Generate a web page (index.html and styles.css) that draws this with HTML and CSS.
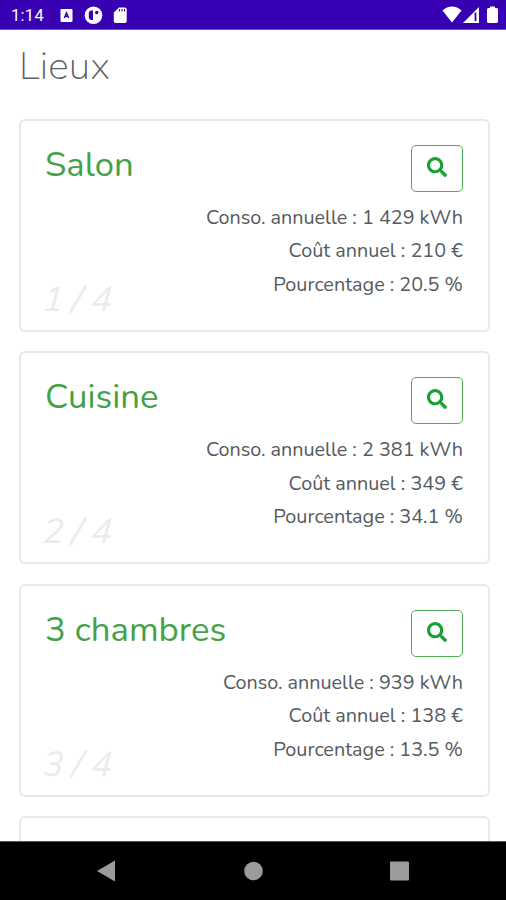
FILE: index.html
```html
<!DOCTYPE html>
<html lang="fr">
<head>
<meta charset="utf-8">
<title>Lieux</title>
<link rel="stylesheet" href="styles.css">
</head>
<body>
<svg class="defs" width="0" height="0"><symbol id="search" viewBox="0 0 512 512"><path d="M505 442.700L405.300 343c-4.500-4.500-10.600-7-17-7H372c27.600-35.300 44-79.700 44-128C416 93.100 322.900 0 208 0S0 93.100 0 208s93.100 208 208 208c48.300 0 92.700-16.400 128-44v16.300c0 6.400 2.500 12.500 7 17l99.700 99.700c9.400 9.400 24.600 9.400 33.900 0l28.300-28.300c9.400-9.400 9.400-24.600.1-34zM208 336c-70.700 0-128-57.200-128-128 0-70.700 57.200-128 128-128 70.700 0 128 57.200 128 128 0 70.700-57.200 128-128 128z"/></symbol></svg>
<header class="status">
  <span class="clock">1:14</span>
  <svg class="notifications" width="70" height="18" viewBox="0 0 70 18">
    <rect x="1.500" y="3" width="12" height="13" rx="1" fill="#fff"/>
    <path d="M5.300 12L7.500 6.800 9.700 12M6.100 10.300h2.800" fill="none" stroke="#3700b3" stroke-width="1.500"/>
    <circle cx="34.500" cy="9.200" r="8.800" fill="#fff"/>
    <path d="M32.200 4.600h1.800v9.400h-1.300c-1.800 0-2.900-1.200-2.900-3V7c0-1.500.9-2.400 2.400-2.400z" fill="#3700b3"/>
    <circle cx="37.700" cy="6.500" r="1.700" fill="#3700b3"/>
    <path d="M60 1.500h6q1.700 0 1.700 1.700v12q0 1.700-1.700 1.700H56.500q-1.700 0-1.700-1.700V6.500z" fill="#fff"/>
    <path d="M60.500 3v2.500M63 3v2.500M65.500 3v2.500" stroke="#3700b3" stroke-width="1.100"/>
  </svg>
  <svg class="signals" width="58" height="18" viewBox="0 0 58 18">
    <path d="M.5 4.500C6-.7 14-.7 19.500 4.500L10 16.500z" fill="#fff"/>
    <path d="M21 17L37 1v16z" fill="#fff"/><path d="M33.500 6.500V15" stroke="#3700b3" stroke-width="1.800"/>
    <path d="M48 2V.5h5V2h1.500q1.500 0 1.500 1.500v12q0 1.500-1.500 1.500h-8Q45 17 45 15.500v-12Q45 2 46.500 2z" fill="#fff"/>
  </svg>
</header>
<main class="content">
  <h1 class="page-title">Lieux</h1>
  <section class="card">
    <div class="card-head"><h2 class="name">Salon</h2><button class="search" aria-label="Détails"><svg width="20" height="20"><use href="#search"/></svg></button></div>
    <div class="details"><p>Conso. annuelle : 1 429 kWh</p><p>Coût annuel : 210 €</p><p>Pourcentage : 20.5 %</p></div>
    <span class="rank">1 / 4</span>
  </section>
  <section class="card">
    <div class="card-head"><h2 class="name">Cuisine</h2><button class="search" aria-label="Détails"><svg width="20" height="20"><use href="#search"/></svg></button></div>
    <div class="details"><p>Conso. annuelle : 2 381 kWh</p><p>Coût annuel : 349 €</p><p>Pourcentage : 34.1 %</p></div>
    <span class="rank">2 / 4</span>
  </section>
  <section class="card">
    <div class="card-head"><h2 class="name">3 chambres</h2><button class="search" aria-label="Détails"><svg width="20" height="20"><use href="#search"/></svg></button></div>
    <div class="details"><p>Conso. annuelle : 939 kWh</p><p>Coût annuel : 138 €</p><p>Pourcentage : 13.5 %</p></div>
    <span class="rank">3 / 4</span>
  </section>
  <section class="card"></section>
</main>
<nav class="navbar">
  <svg width="20" height="22" viewBox="0 0 20 22"><path d="M1 11L19 .5v21z" fill="#9b9b9b"/></svg>
  <svg width="20" height="20" viewBox="0 0 20 20"><circle cx="10.500" cy="10" r="9.300" fill="#9b9b9b"/></svg>
  <svg width="20" height="20" viewBox="0 0 20 20"><rect x="0" y=".5" width="19" height="19" rx="1" fill="#9b9b9b"/></svg>
</nav>
</body>
</html>
```
FILE: styles.css
```css
* { box-sizing: border-box; }
body {
  margin: 0;
  height: 900px;
  overflow: hidden;
  display: flex;
  flex-direction: column;
  background: #fff;
  color: #555b60;
  font-family: Nunito, Lato, sans-serif;
}
.defs { position: absolute; }
h1, h2, p { margin: 0; }
.status {
  flex: none;
  height: 30px;
  padding: 0 6px 0 11px;
  display: flex;
  align-items: center;
  background: #3700b3;
  border-bottom: 1px solid #7655c9;
}
.clock { width: 48px; color: #fff; font: 400 16.500px/30px Roboto, sans-serif; letter-spacing: .3px; white-space: nowrap; padding-top: 2px; }
.notifications { margin-top: 1px; }
.signals { margin: 1px 0 0 auto; }
.content { height: 811px; overflow: hidden; padding: 10px 16px 0 19px; }
.page-title {
  height: 78.500px;
  font: 200 39px/53px Nunito, Lato, sans-serif;
  letter-spacing: .2px;
  color: #5c6166;
}
.card {
  position: relative;
  width: 471px;
  height: 213px;
  margin-bottom: 19.500px;
  padding: 24px 25px 0 24px;
  border: 2px solid #e8e8e8;
  border-radius: 6px;
}
.card-head { display: flex; align-items: flex-start; justify-content: space-between; height: 48px; }
.name { font-weight: 450; font-size: 34.700px; line-height: 40px; color: #43a247; white-space: nowrap; }
.search {
  width: 52px;
  height: 47px;
  padding: 0 0 3px;
  display: flex;
  align-items: center;
  justify-content: center;
  border: 1.500px solid #4aae50;
  border-radius: 5px;
  background: #fff;
}
.search svg { fill: #17a033; }
.details { padding-top: 8px; text-align: right; font-size: 19.800px; font-weight: 450; line-height: 33.500px; white-space: nowrap; }
.rank {
  position: absolute;
  left: 22px;
  bottom: 9px;
  font-size: 34.700px;
  line-height: 42px;
  font-style: italic;
  color: #ebebeb;
  transform: skewX(-6deg);
}
.navbar {
  flex: none;
  height: 59px;
  padding: 0 96px;
  display: flex;
  align-items: center;
  justify-content: space-between;
  background: #000;
  border-top: 1px solid #555;
}
```
